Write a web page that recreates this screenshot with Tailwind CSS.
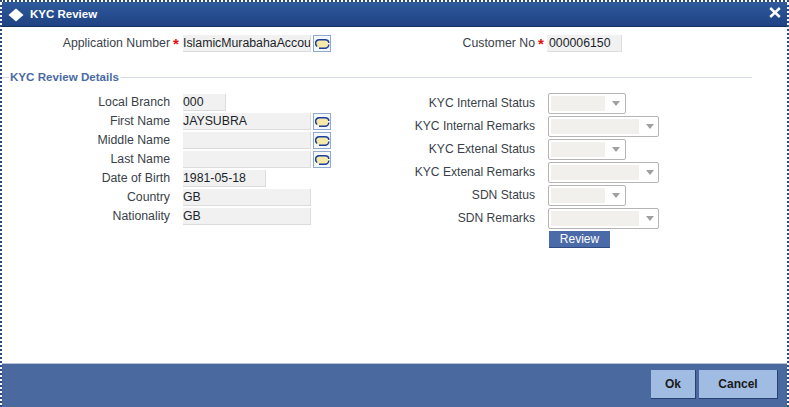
<!DOCTYPE html>
<html lang="en">
<head>
  <meta charset="UTF-8" />
  <title>KYC Review</title>
  <script src="https://cdn.jsdelivr.net/npm/@tailwindcss/browser@4"></script>
</head>
<body class="w-[789px] h-[407px] overflow-hidden bg-white font-['Liberation_Sans',Arial,sans-serif] text-[12.3px] text-[#3a3f4a] whitespace-nowrap">
  <div class="h-[407px] flex flex-col border-2 border-b-0 border-dotted border-[#2b4a7d]">
    <!-- title bar -->
    <header class="h-[25px] shrink-0 flex items-center justify-between bg-gradient-to-b from-[#2f5a9c] to-[#1f4284] border-b border-[#17315f] pl-[6px] pr-[6px] text-white">
      <div class="flex items-center gap-[6px] mt-[1px]">
        <svg width="16" height="14" viewBox="0 0 16 14"><path d="M8 0.5 L15.5 7 L8 13.5 L0.5 7 Z" fill="#fff"/></svg>
        <span class="text-[11.5px] font-bold">KYC Review</span>
      </div>
      <svg class="mb-[3px]" width="12" height="11" viewBox="0 0 12 11"><path d="M1.2 1 L10.8 10 M10.8 1 L1.2 10" stroke="#fff" stroke-width="2.4"/></svg>
    </header>

    <main class="flex-1 bg-white">
      <!-- top fields -->
      <div class="flex h-[17px] mt-[8px] items-center">
        <label class="w-[168px] text-right">Application Number</label>
        <span class="w-[13px] pl-[3px] text-[15px] leading-[17px] text-[#e01010] font-bold">*</span>
        <div class="w-[128px] h-[17px] bg-[#f1f1f1] border-r border-b border-[#dcdcdc] leading-[16px] text-[#1b1f2a] overflow-hidden">IslamicMurabahaAccou</div>
        <button class="ml-[2px] w-[18px] h-[17px] border border-[#8fa9cf] bg-[#f4f7fc] flex items-center justify-center">
          <svg width="16" height="12" viewBox="0 0 16 12"><rect x="2" y="2" width="12" height="8" rx="4" fill="#f7e9a8"/><path d="M3 8.5 C0.8 6.5 1 2 5 1.7 H11 C13.5 1.7 14.8 3.2 14.8 5 M14.8 6.6 C14.8 8.8 13 10.3 11 10.3 H5" fill="none" stroke="#1d3f9a" stroke-width="1.5"/></svg>
        </button>
        <label class="ml-[128px] w-[76px] text-right">Customer No</label>
        <span class="w-[13px] pl-[3px] text-[15px] leading-[17px] text-[#e01010] font-bold">*</span>
        <div class="ml-[-1px] w-[75px] h-[17px] bg-[#f1f1f1] border-r border-b border-[#dcdcdc] pl-[2px] leading-[16px] text-[#1b1f2a]">000006150</div>
      </div>

      <!-- section heading -->
      <div class="flex items-center mt-[17px] h-[16px]">
        <span class="w-[7px] h-px bg-[#d5d9e6]"></span>
        <h2 class="font-bold text-[11.6px] text-[#4a6aa5] px-[1px]">KYC Review Details</h2>
        <span class="w-[631px] h-px bg-[#d5d9e6] ml-[1px]"></span>
      </div>

      <div class="flex mt-[9px]">
        <!-- left column -->
        <div class="w-[408px] flex flex-col gap-[2px]">
          <div class="flex h-[17px] items-center"><label class="w-[168px] text-right">Local Branch</label><div class="ml-[13px] w-[43px] h-[17px] bg-[#f1f1f1] border-r border-b border-[#dcdcdc] leading-[16px] text-[#1b1f2a]">000</div></div>
          <div class="flex h-[17px] items-center"><label class="w-[168px] text-right">First Name</label><div class="ml-[13px] w-[128px] h-[17px] bg-[#f1f1f1] border-r border-b border-[#dcdcdc] leading-[16px] text-[#1b1f2a]">JAYSUBRA</div>
            <button class="ml-[2px] w-[18px] h-[17px] border border-[#8fa9cf] bg-[#f4f7fc] flex items-center justify-center"><svg width="16" height="12" viewBox="0 0 16 12"><rect x="2" y="2" width="12" height="8" rx="4" fill="#f7e9a8"/><path d="M3 8.5 C0.8 6.5 1 2 5 1.7 H11 C13.5 1.7 14.8 3.2 14.8 5 M14.8 6.6 C14.8 8.8 13 10.3 11 10.3 H5" fill="none" stroke="#1d3f9a" stroke-width="1.5"/></svg></button></div>
          <div class="flex h-[17px] items-center"><label class="w-[168px] text-right">Middle Name</label><div class="ml-[13px] w-[128px] h-[17px] bg-[#f1f1f1] border-r border-b border-[#dcdcdc]"></div>
            <button class="ml-[2px] w-[18px] h-[17px] border border-[#8fa9cf] bg-[#f4f7fc] flex items-center justify-center"><svg width="16" height="12" viewBox="0 0 16 12"><rect x="2" y="2" width="12" height="8" rx="4" fill="#f7e9a8"/><path d="M3 8.5 C0.8 6.5 1 2 5 1.7 H11 C13.5 1.7 14.8 3.2 14.8 5 M14.8 6.6 C14.8 8.8 13 10.3 11 10.3 H5" fill="none" stroke="#1d3f9a" stroke-width="1.5"/></svg></button></div>
          <div class="flex h-[17px] items-center"><label class="w-[168px] text-right">Last Name</label><div class="ml-[13px] w-[128px] h-[17px] bg-[#f1f1f1] border-r border-b border-[#dcdcdc]"></div>
            <button class="ml-[2px] w-[18px] h-[17px] border border-[#8fa9cf] bg-[#f4f7fc] flex items-center justify-center"><svg width="16" height="12" viewBox="0 0 16 12"><rect x="2" y="2" width="12" height="8" rx="4" fill="#f7e9a8"/><path d="M3 8.5 C0.8 6.5 1 2 5 1.7 H11 C13.5 1.7 14.8 3.2 14.8 5 M14.8 6.6 C14.8 8.8 13 10.3 11 10.3 H5" fill="none" stroke="#1d3f9a" stroke-width="1.5"/></svg></button></div>
          <div class="flex h-[17px] items-center"><label class="w-[168px] text-right">Date of Birth</label><div class="ml-[13px] w-[83px] h-[17px] bg-[#f1f1f1] border-r border-b border-[#dcdcdc] leading-[16px] text-[#1b1f2a]">1981-05-18</div></div>
          <div class="flex h-[17px] items-center"><label class="w-[168px] text-right">Country</label><div class="ml-[13px] w-[128px] h-[17px] bg-[#f1f1f1] border-r border-b border-[#dcdcdc] leading-[16px] text-[#1b1f2a]">GB</div></div>
          <div class="flex h-[17px] items-center"><label class="w-[168px] text-right">Nationality</label><div class="ml-[13px] w-[128px] h-[17px] bg-[#f1f1f1] border-r border-b border-[#dcdcdc] leading-[16px] text-[#1b1f2a]">GB</div></div>
        </div>

        <!-- right column -->
        <div class="flex flex-col gap-[2px] mt-[-1px] text-[12.1px]">
          <div class="flex h-[21px] items-center"><label class="w-[125px] text-right">KYC Internal Status</label><div class="ml-[13px] w-[78px] h-[21px] border border-[#b5b5b5] rounded-[2px] p-[2px] flex items-center"><span class="w-[54px] h-[15px] bg-[#f1f0ec]"></span><svg class="ml-[7px]" width="8" height="5" viewBox="0 0 8 5"><path d="M0 0 H8 L4 5 Z" fill="#a0a0a0"/></svg></div></div>
          <div class="flex h-[21px] items-center"><label class="w-[125px] text-right">KYC Internal Remarks</label><div class="ml-[13px] w-[111px] h-[21px] border border-[#b5b5b5] rounded-[2px] p-[2px] flex items-center"><span class="w-[88px] h-[15px] bg-[#f1f0ec]"></span><svg class="ml-[7px]" width="8" height="5" viewBox="0 0 8 5"><path d="M0 0 H8 L4 5 Z" fill="#a0a0a0"/></svg></div></div>
          <div class="flex h-[21px] items-center"><label class="w-[125px] text-right">KYC Extenal Status</label><div class="ml-[13px] w-[78px] h-[21px] border border-[#b5b5b5] rounded-[2px] p-[2px] flex items-center"><span class="w-[54px] h-[15px] bg-[#f1f0ec]"></span><svg class="ml-[7px]" width="8" height="5" viewBox="0 0 8 5"><path d="M0 0 H8 L4 5 Z" fill="#a0a0a0"/></svg></div></div>
          <div class="flex h-[21px] items-center"><label class="w-[125px] text-right">KYC Extenal Remarks</label><div class="ml-[13px] w-[111px] h-[21px] border border-[#b5b5b5] rounded-[2px] p-[2px] flex items-center"><span class="w-[88px] h-[15px] bg-[#f1f0ec]"></span><svg class="ml-[7px]" width="8" height="5" viewBox="0 0 8 5"><path d="M0 0 H8 L4 5 Z" fill="#a0a0a0"/></svg></div></div>
          <div class="flex h-[21px] items-center"><label class="w-[125px] text-right">SDN Status</label><div class="ml-[13px] w-[78px] h-[21px] border border-[#b5b5b5] rounded-[2px] p-[2px] flex items-center"><span class="w-[54px] h-[15px] bg-[#f1f0ec]"></span><svg class="ml-[7px]" width="8" height="5" viewBox="0 0 8 5"><path d="M0 0 H8 L4 5 Z" fill="#a0a0a0"/></svg></div></div>
          <div class="flex h-[21px] items-center"><label class="w-[125px] text-right">SDN Remarks</label><div class="ml-[13px] w-[111px] h-[21px] border border-[#b5b5b5] rounded-[2px] p-[2px] flex items-center"><span class="w-[88px] h-[15px] bg-[#f1f0ec]"></span><svg class="ml-[7px]" width="8" height="5" viewBox="0 0 8 5"><path d="M0 0 H8 L4 5 Z" fill="#a0a0a0"/></svg></div></div>
          <button class="ml-[139px] w-[61px] h-[17px] bg-[#4a6ba8] border-b border-[#2f4a80] text-white text-[12px] leading-[15px]">Review</button>
        </div>
      </div>
    </main>

    <!-- footer -->
    <footer class="h-[44px] shrink-0 bg-[#4a699f] border-t border-[#b9c4d8] flex justify-end items-start pt-[6px] pr-[9px] gap-[3px]">
      <button class="w-[45px] h-[29px] bg-[#a0bce3] border-r border-b border-[#27406f] text-[12px] font-bold text-[#1a1a1a]">Ok</button>
      <button class="w-[79px] h-[29px] bg-[#a0bce3] border-r border-b border-[#27406f] text-[12px] font-bold text-[#1a1a1a]">Cancel</button>
    </footer>
  </div>
</body>
</html>
